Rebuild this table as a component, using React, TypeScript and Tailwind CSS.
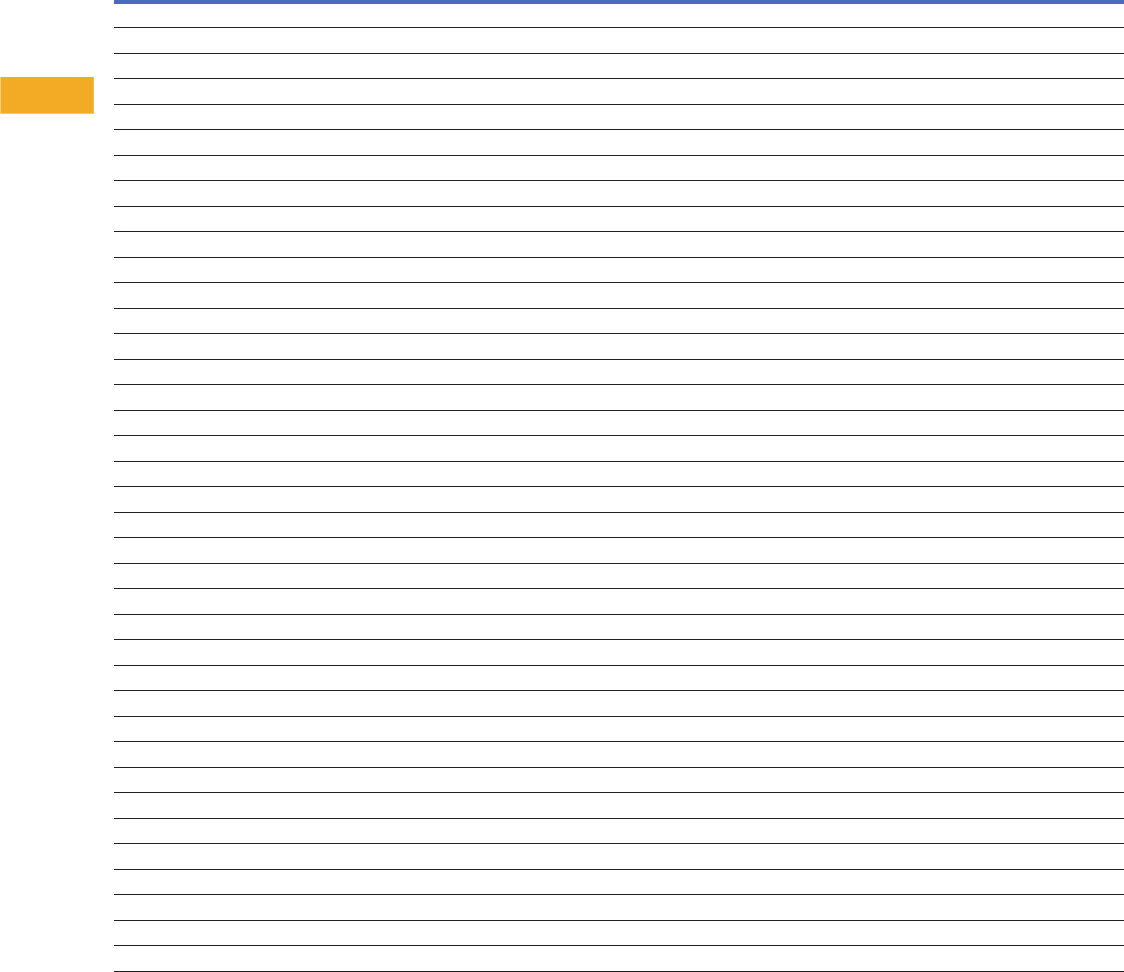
import React from 'react';

const rows = Array.from({ length: 38 }, (_, i) => i);

export default function App() {
  return (
    <div className="flex h-[972px] w-[1124px] overflow-hidden bg-white">
      {/* Left margin with tab */}
      <div className="w-[114px] shrink-0">
        <div className="mt-[77px] h-[37px] w-[94px] border-b border-l border-r border-b-[#f6c46b] border-l-[#f8cf86] border-r-[#f6bd55] bg-[#f3aa24]" />
      </div>

      {/* Ruled page */}
      <div className="flex min-h-0 flex-1 flex-col overflow-hidden">
        <div className="h-[4px] shrink-0 bg-[#4a6bbd]" />
        <div className="h-[23px] shrink-0" />
        {rows.map(i => (
          <div key={i} className="h-[25.5px] shrink-0 border-t border-[#231f20]" />
        ))}
      </div>
    </div>
  );
}
